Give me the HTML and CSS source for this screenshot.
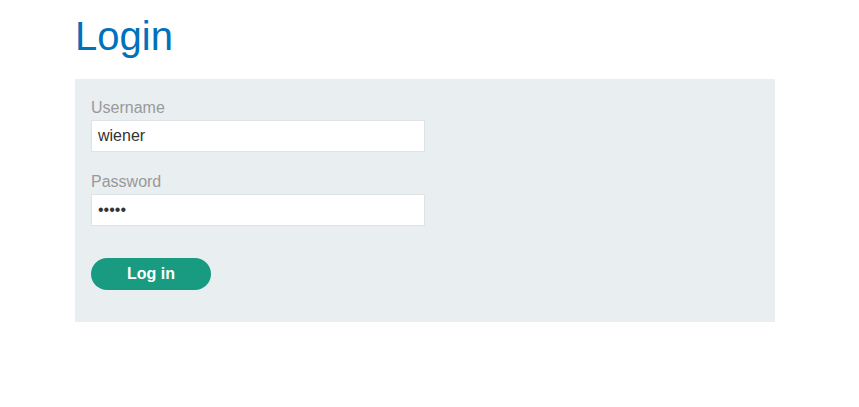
FILE: index.html
```html
<!DOCTYPE html>
<html lang="en">
<head>
    <meta charset="UTF-8">
    <meta name="viewport" content="width=device-width, initial-scale=1.0">
    <title>Login</title>
    <link rel="stylesheet" href="styles.css">
</head>
<body>
    <div class="container">
        <h1>Login</h1>
        <form class="loginForm">
            <label for="username">Username</label>
            <input type="text" id="username" value="wiener">
            <label for="password">Password</label>
            <input type="password" id="password" value="peter">
            <button type="button" id="Submit">Log in</button>
        </form>
    </div>
</body>
</html>
```

FILE: styles.css
```css
body {
    margin: 0;
    background-color: #fff;
    font-family: Arial, "Liberation Sans", sans-serif;
}

.container {
    width: 700px;
    margin-left: 75px;
    padding-top: 13px;
}

h1 {
    margin: 0 0 20px 0;
    font-size: 40px;
    font-weight: normal;
    line-height: 46px;
    color: #0071bc;
}

.loginForm {
    display: flex;
    flex-direction: column;
    align-items: flex-start;
    background-color: #e9eef1;
    padding: 19px 16px 32px 16px;
}

label {
    color: #999;
    font-size: 16px;
    line-height: 20px;
    margin-bottom: 2px;
}

input {
    box-sizing: border-box;
    width: 334px;
    height: 32px;
    margin: 0 0 20px 0;
    padding: 0 6px;
    border: 1px solid #dfe3e5;
    background-color: #fff;
    color: #333;
    font-family: Arial, "Liberation Sans", sans-serif;
    font-size: 16px;
    outline: none;
}

#password {
    margin-bottom: 32px;
}

button {
    width: 120px;
    height: 32px;
    border: none;
    border-radius: 16px;
    background-color: #189b80;
    color: #fff;
    font-family: Arial, "Liberation Sans", sans-serif;
    font-size: 16px;
    font-weight: bold;
    cursor: pointer;
}
```
